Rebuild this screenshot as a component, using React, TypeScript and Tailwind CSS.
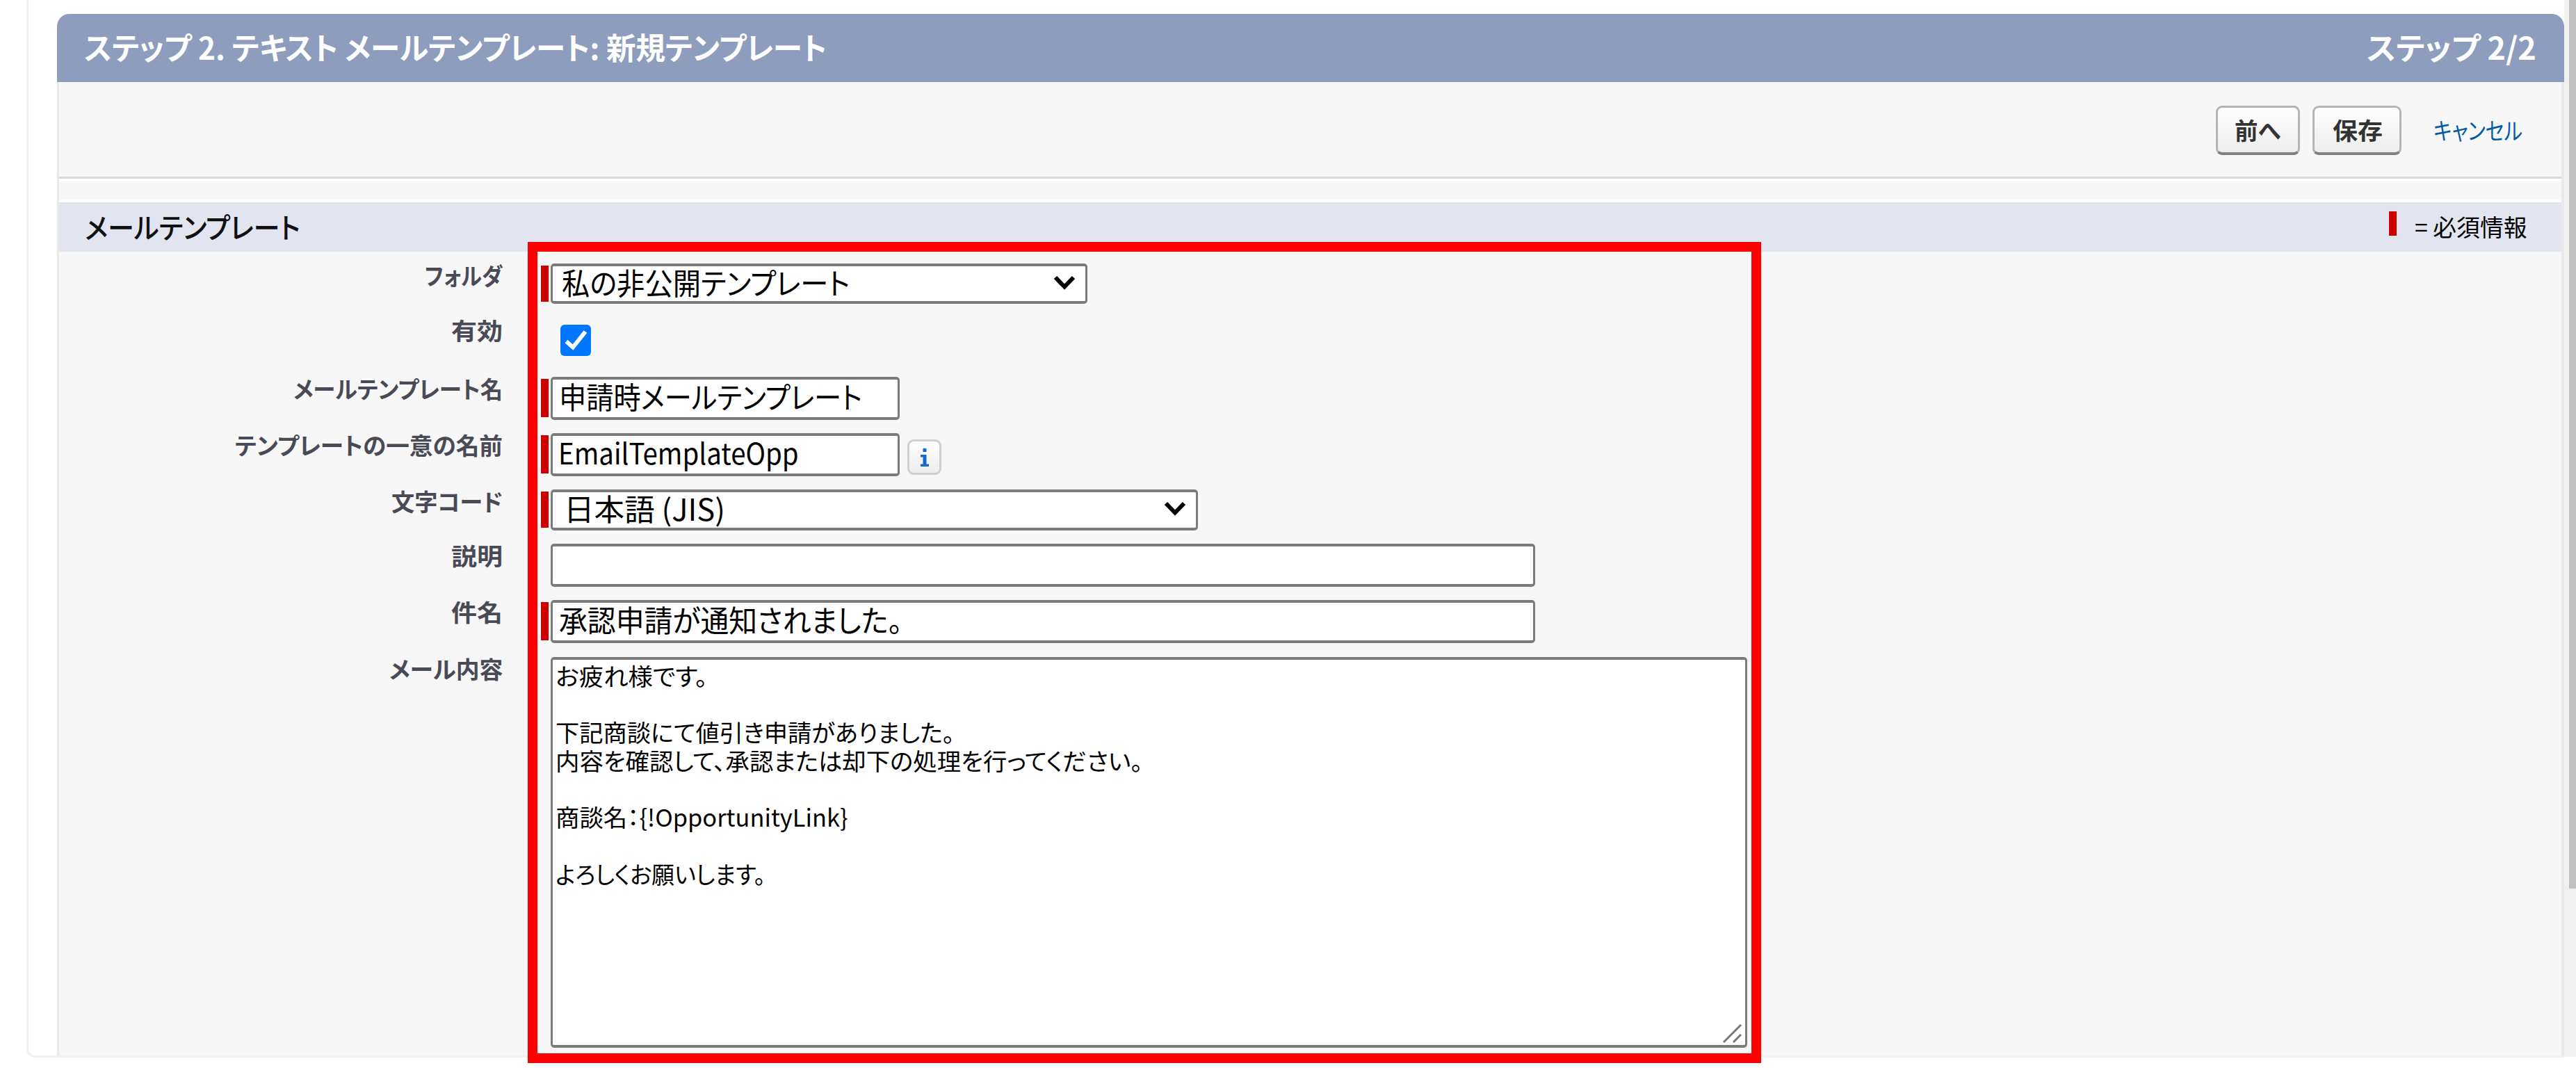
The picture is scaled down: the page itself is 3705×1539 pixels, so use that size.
import { useLayoutEffect, useRef, useState } from "react";
import type { ReactNode } from "react";
import clsx from "clsx";

/** One line of text, condensed or expanded to fill the width of its box. */
function Fit({ children, className }: { children: string; className: string }) {
  const box = useRef<HTMLSpanElement>(null);
  const text = useRef<HTMLSpanElement>(null);
  const [scale, setScale] = useState(1);

  useLayoutEffect(() => {
    if (box.current && text.current && text.current.offsetWidth > 0) {
      setScale(box.current.offsetWidth / text.current.offsetWidth);
    }
  }, [children]);

  return (
    <span ref={box} className={clsx("block shrink-0 whitespace-nowrap", className)}>
      <span
        ref={text}
        className="inline-block origin-left align-top"
        style={{ transform: `scaleX(${scale})` }}
      >
        {children}
      </span>
    </span>
  );
}

function Row({
  label,
  labelWidth,
  height,
  required,
  children,
}: {
  label: string;
  labelWidth: string;
  height: string;
  required?: string;
  children: ReactNode;
}) {
  return (
    <div className={clsx("flex items-start", height)}>
      <div className="flex w-[638px] shrink-0 justify-end">
        <Fit className={clsx("text-[34px] font-bold leading-[34px] text-[#4a4a56]", labelWidth)}>{label}</Fit>
      </div>
      <div className="flex w-[69px] shrink-0 justify-end pr-[3px] pt-[3px]">
        {required && <div className={clsx("w-[11px] bg-[#c00]", required)} />}
      </div>
      {children}
    </div>
  );
}

function Field({ className, children }: { className: string; children?: ReactNode }) {
  return (
    <div
      className={clsx(
        "flex shrink-0 rounded-[5px] border-x-[3px] border-y-4 border-[#7b7b7b] bg-white text-black",
        className,
      )}
    >
      {children}
    </div>
  );
}

function Arrow() {
  return (
    <svg className="ml-auto mr-[14px] mt-[13px] h-[22px] w-[32px]" viewBox="0 0 32 22">
      <path d="M3 3 L16 16.5 L29 3" fill="none" stroke="#000" strokeWidth="6" />
    </svg>
  );
}

const bodyLine = "h-[40.7px] text-[34px] leading-[40px]";

export default function App() {
  return (
    <div className="relative flex h-[1539px] w-[3705px] items-start overflow-hidden bg-white font-['Noto_Sans_CJK_JP',sans-serif] [font-feature-settings:'palt']">
      <div className="ml-[38px] flex h-[1521px] w-[3650px] shrink-0 flex-col rounded-bl-[12px] border-b-[3px] border-l-[3px] border-[#f1f1f1] pl-[41px] pt-[20px]">
        <header className="flex h-[98px] shrink-0 justify-between rounded-t-[18px] bg-[#8e9cbe] pl-[39px] pr-[40px] font-bold text-white">
          <Fit className="w-[1068px] pt-[17px] text-[44px] leading-[60px]">
            ステップ 2. テキスト メールテンプレート: 新規テンプレート
          </Fit>
          <Fit className="w-[244px] pt-[17px] text-[44px] leading-[60px]">ステップ 2/2</Fit>
        </header>

        <main className="flex min-h-0 flex-1 flex-col border-l-[3px] border-r-4 border-[#e9e9e9] bg-[#f7f7f7]">
          <div className="flex h-[139px] shrink-0 items-start justify-end border-b-[3px] border-[#dadada] pt-[34px]">
            <button className="flex h-[71px] w-[121px] justify-center rounded-[9px] border-[3px] border-b-4 border-[#b5b5b5] border-b-[#7f7f7f] bg-linear-to-b from-white to-[#ededed] pr-[2px] pt-[15px]">
              <Fit className="w-[66px] text-[34px] font-bold leading-[34px] text-[#333]">前へ</Fit>
            </button>
            <button className="ml-[18px] flex h-[71px] w-[128px] justify-center rounded-[9px] border-[3px] border-b-4 border-[#b5b5b5] border-b-[#7f7f7f] bg-linear-to-b from-white to-[#ededed] pr-[3px] pt-[15px]">
              <Fit className="w-[72px] text-[34px] font-bold leading-[34px] text-[#333]">保存</Fit>
            </button>
            <a className="ml-[46px] mr-[56px] mt-[18px]">
              <Fit className="w-[128px] text-[34px] leading-[34px] text-[#015ba7]">キャンセル</Fit>
            </a>
          </div>

          <div className="h-[30px] shrink-0 border-t-4 border-white" />

          <div className="flex h-[75px] shrink-0 items-start border-t-4 border-white bg-[#e2e5ef] pl-[37px]">
            <Fit className="w-[310px] pt-[11px] text-[41px] font-medium leading-[46px] text-[#111]">
              メールテンプレート
            </Fit>
            <div className="ml-auto mt-[13px] h-[35px] w-[11px] bg-[#c00]" />
            <Fit className="ml-[26px] mr-[49px] mt-[18px] w-[162px] text-[34px] leading-[34px] text-black">
              = 必須情報
            </Fit>
          </div>

          <section className="flex flex-col pt-[17px]">
            <Row label="フォルダ" labelWidth="w-[112px]" height="h-[79px]" required="h-[52px]">
              <Field className="h-[58px] w-[772px] pl-[13px]">
                <Fit className="w-[414px] text-[43px] leading-[45px]">私の非公開テンプレート</Fit>
                <Arrow />
              </Field>
            </Row>
            <Row label="有効" labelWidth="w-[74px]" height="h-[84px]">
              <svg className="ml-[14px] mt-[9px] h-[45px] w-[44px]" viewBox="0 0 44 45">
                <rect width="44" height="45" rx="6" fill="#0075ff" />
                <path d="M8.500 24 L18 32.500 L36 10" fill="none" stroke="#fff" strokeWidth="6" />
              </svg>
            </Row>
            <Row label="メールテンプレート名" labelWidth="w-[301px]" height="h-[81px]" required="h-[55px]">
              <Field className="h-[62px] w-[502px] pl-[9px]">
                <Fit className="w-[436px] text-[43px] leading-[46px]">申請時メールテンプレート</Fit>
              </Field>
            </Row>
            <Row label="テンプレートの一意の名前" labelWidth="w-[385px]" height="h-[81px]" required="h-[55px]">
              <Field className="h-[62px] w-[502px] pl-[8px]">
                <Fit className="w-[346px] text-[42px] leading-[46px]">EmailTemplateOpp</Fit>
              </Field>
              <div className="ml-[11px] mt-[9px] flex h-[51px] w-[49px] items-center justify-center rounded-[9px] border-[3px] border-[#cfcfcf] bg-linear-to-b from-white to-[#ededed]">
                <svg className="h-[26px] w-[12px]" viewBox="0 0 12 26">
                  <path d="M3.500 0h5v5h-5zM0 9h8.500v13.500H12V26H0v-3.500h3.500V12.500H0z" fill="#1468d0" />
                </svg>
              </div>
            </Row>
            <Row label="文字コード" labelWidth="w-[160px]" height="h-[78px]" required="h-[52px]">
              <Field className="h-[59px] w-[931px] pl-[16px]">
                <Fit className="w-[232px] text-[43px] leading-[45px]">日本語 (JIS)</Fit>
                <Arrow />
              </Field>
            </Row>
            <Row label="説明" labelWidth="w-[74px]" height="h-[81px]">
              <Field className="h-[62px] w-[1416px]" />
            </Row>
            <Row label="件名" labelWidth="w-[74px]" height="h-[82px]" required="h-[55px]">
              <Field className="h-[62px] w-[1416px] pl-[9px]">
                <Fit className="w-[494px] text-[43px] leading-[46px]">承認申請が通知されました。</Fit>
              </Field>
            </Row>
            <Row label="メール内容" labelWidth="w-[163px]" height="h-[562px]">
              <Field className="relative h-[562px] w-[1721px] flex-col pl-[4px] pt-[3px]">
                <Fit className={clsx("w-[218px]", bodyLine)}>お疲れ様です。</Fit>
                <div className={bodyLine} />
                <Fit className={clsx("w-[574px]", bodyLine)}>下記商談にて値引き申請がありました。</Fit>
                <Fit className={clsx("w-[844px]", bodyLine)}>
                  内容を確認して、承認または却下の処理を行ってください。
                </Fit>
                <div className={bodyLine} />
                <Fit className={clsx("w-[421px]", bodyLine)}>{"商談名：{!OpportunityLink}"}</Fit>
                <div className={bodyLine} />
                <Fit className={clsx("w-[302px]", bodyLine)}>よろしくお願いします。</Fit>
                <svg className="absolute bottom-[3px] right-[4px] h-[28px] w-[28px]" viewBox="0 0 28 28">
                  <path d="M1 27 L26 2 M15 27 L26 16" stroke="#777" strokeWidth="3" />
                </svg>
              </Field>
            </Row>
          </section>
        </main>
      </div>

      <div className="flex h-[1520px] w-[17px] shrink-0 justify-end bg-[#f0f0f0]">
        <div className="h-[1278px] w-[10px] bg-[#c1c1c1]" />
      </div>

      <div className="absolute left-[759px] top-[348px] h-[1181px] w-[1774px] border-[14px] border-[#f00]" />
    </div>
  );
}
